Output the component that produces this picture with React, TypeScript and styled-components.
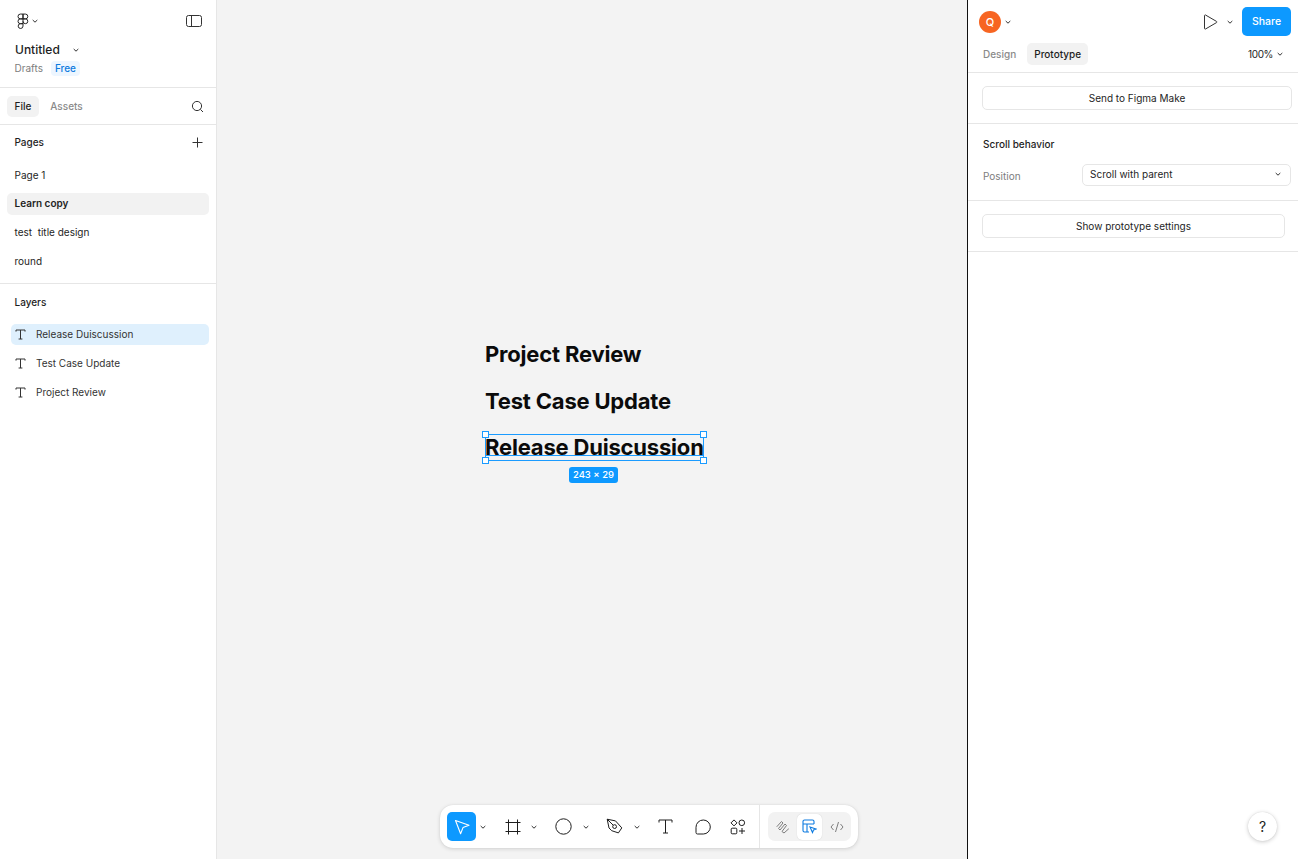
import React from "react";
import styled, { createGlobalStyle } from "styled-components";

const Global = createGlobalStyle`
  html, body { margin: 0; padding: 0; height: 100%; }
  body { font-family: Inter, "Liberation Sans", sans-serif; font-size: 10px; color: #1e1e1e; background: #fff; overflow: hidden; -webkit-font-smoothing: antialiased; }
  #root { height: 100%; }
`;

const Page = styled.div`
  display: grid;
  grid-template-columns: 217px 750px 1px 330px;
  width: 1298px;
  height: 859px;
`;

const LeftPanel = styled.aside`
  display: flex;
  flex-direction: column;
  background: #fff;
  border-right: 1px solid #e6e6e6;
  box-sizing: border-box;
`;

const FileHeader = styled.header`
  height: 88px;
  box-sizing: border-box;
  border-bottom: 1px solid #e6e6e6;
  padding: 11px 14px 0 14px;
`;

const HeaderTop = styled.div`
  display: flex;
  align-items: center;
  justify-content: space-between;
  height: 20px;
`;

const Row = styled.div`
  display: flex;
  align-items: center;
`;

const LogoGroup = styled(Row)`
  gap: 2px;
  padding-left: 3px;
`;

const FileName = styled.div`
  display: flex;
  align-items: center;
  gap: 12px;
  margin-top: 9px;
  padding-left: 1px;
  height: 19px;
  font-size: 12px;
  font-weight: 500;
  color: #1e1e1e;
`;

const FileMeta = styled.div`
  display: flex;
  align-items: center;
  gap: 8px;
  height: 16px;
  margin-top: 1px;
  padding-left: 0.5px;
  color: #7d7d7d;
  font-size: 10px;
`;

const FreeBadge = styled.span`
  background: #edf6ff;
  color: #0d7be0;
  font-size: 10px;
  font-weight: 500;
  border-radius: 4px;
  padding: 0 4px;
  height: 15px;
  line-height: 15px;
`;

const TabsBar = styled.div`
  height: 37px;
  box-sizing: border-box;
  border-bottom: 1px solid #e6e6e6;
  display: flex;
  align-items: center;
  padding: 0 12px 0 7px;
  gap: 4px;
`;

const Tab = styled.div<{ $active?: boolean }>`
  height: 21px;
  line-height: 20px;
  padding: 0 7.5px;
  border-radius: 5px;
  font-size: 10px;
  font-weight: 500;
  background: ${(p) => (p.$active ? "#f2f2f2" : "transparent")};
  color: ${(p) => (p.$active ? "#1e1e1e" : "#8a8a8a")};
`;

const TabsSpacer = styled.div`
  flex: 1;
`;

const PagesSection = styled.section`
  height: 159px;
  box-sizing: border-box;
  border-bottom: 1px solid #e6e6e6;
`;

const SectionHead = styled.div<{ $lift?: boolean }>`
  display: flex;
  align-items: center;
  justify-content: space-between;
  height: 36px;
  box-sizing: border-box;
  padding: 0 13px ${(p) => (p.$lift ? "2px" : "0")} 14.5px;
  font-size: 10px;
  font-weight: 500;
  color: #1e1e1e;
`;

const PageList = styled.div`
  padding: 0 7px;
  display: flex;
  flex-direction: column;
`;

const PageItem = styled.div<{ $active?: boolean }>`
  height: ${(p) => (p.$active ? "22px" : "29px")};
  line-height: ${(p) => (p.$active ? "20px" : "29px")};
  margin: ${(p) => (p.$active ? "3px 0" : "0")};
  padding-left: 7.5px;
  border-radius: 5px;
  font-size: 10px;
  white-space: pre;
  font-weight: ${(p) => (p.$active ? 600 : 400)};
  background: ${(p) => (p.$active ? "#f2f2f2" : "transparent")};
`;

const LayerList = styled.div`
  padding: 4px 7px 0 11px;
  display: flex;
  flex-direction: column;
  gap: 8px;
`;

const LayerItem = styled.div<{ $active?: boolean }>`
  height: 21px;
  box-sizing: border-box;
  display: flex;
  align-items: center;
  gap: 10px;
  padding: 0 0 1px 4px;
  border-radius: 5px;
  font-size: 10px;
  color: #333;
  background: ${(p) => (p.$active ? "#dff0fd" : "transparent")};
`;

const Canvas = styled.main`
  position: relative;
  background: #f3f3f3;
`;

const CanvasText = styled.div<{ $x: number; $y: number }>`
  position: absolute;
  left: ${(p) => p.$x}px;
  top: ${(p) => p.$y}px;
  font-size: 22px;
  font-weight: 700;
  line-height: 29px;
  letter-spacing: -0.19px;
  color: #0b0b0b;
  white-space: nowrap;
`;

const Selection = styled.div`
  position: absolute;
  left: 268px;
  top: 434px;
  width: 217px;
  height: 25px;
  border: 1px solid #1a9bff;
  pointer-events: none;
`;

const Handle = styled.span<{ $h: "l" | "r"; $v: "t" | "b" }>`
  position: absolute;
  width: 5px;
  height: 5px;
  background: #fff;
  border: 1px solid #1a9bff;
  ${(p) => (p.$h === "l" ? "left: -4px;" : "right: -4px;")}
  ${(p) => (p.$v === "t" ? "top: -4px;" : "bottom: -4px;")}
`;

const Underline = styled.span`
  position: absolute;
  left: 0;
  right: 0;
  top: 20px;
  height: 1px;
  background: #1a9bff;
`;

const SizeBadge = styled.div`
  position: absolute;
  left: 352px;
  top: 467px;
  width: 49px;
  height: 16px;
  line-height: 16px;
  text-align: center;
  background: #0d99ff;
  color: #fff;
  border-radius: 3px;
  font-size: 9.5px;
  font-weight: 500;
`;

const Toolbar = styled.div`
  position: absolute;
  left: 223px;
  top: 805px;
  width: 418px;
  height: 43px;
  box-sizing: border-box;
  background: #fff;
  border-radius: 13px;
  box-shadow: 0 1px 4px rgba(0, 0, 0, 0.14), 0 0 1px rgba(0, 0, 0, 0.12);
  display: flex;
  align-items: center;
`;

const ToolGroup = styled.div`
  width: 320px;
  height: 43px;
  box-sizing: border-box;
  border-right: 1px solid #e6e6e6;
  display: grid;
  grid-template-columns: 29px 14px 8px 29px 14px 8px 29px 16px 6px 29px 15px 7px 29px 8px 29px 6px 29px;
  align-items: center;
  padding-left: 7px;
`;

const ToolButton = styled.div<{ $active?: boolean }>`
  width: 29px;
  height: 29px;
  border-radius: 5px;
  background: ${(p) => (p.$active ? "#0d99ff" : "transparent")};
  color: ${(p) => (p.$active ? "#fff" : "#1e1e1e")};
  display: flex;
  align-items: center;
  justify-content: center;
`;

const ModeGroup = styled.div`
  margin-left: 8px;
  width: 83px;
  height: 29px;
  background: #f2f2f2;
  border-radius: 7px;
  display: flex;
  align-items: center;
`;

const ModeButton = styled.div<{ $active?: boolean }>`
  width: ${(p) => (p.$active ? "25px" : "29px")};
  height: 26px;
  border-radius: 5px;
  background: ${(p) => (p.$active ? "#fff" : "transparent")};
  display: flex;
  align-items: center;
  justify-content: center;
  box-shadow: ${(p) => (p.$active ? "0 0 1px rgba(0,0,0,.2)" : "none")};
`;

const Divider = styled.div`
  background: #111;
`;

const RightPanel = styled.aside`
  position: relative;
  background: #fff;
  display: flex;
  flex-direction: column;
`;

const TopBar = styled.div`
  height: 43px;
  box-sizing: border-box;
  padding: 0 7px 0 11px;
  display: flex;
  align-items: center;
  justify-content: space-between;
`;

const AvatarGroup = styled(Row)`
  gap: 3px;
`;

const Avatar = styled.div`
  width: 22px;
  height: 22px;
  border-radius: 50%;
  background: #f76522;
  color: #fff;
  font-size: 11px;
  font-weight: 500;
  display: flex;
  align-items: center;
  justify-content: center;
`;

const PlayGroup = styled(Row)`
  gap: 8px;
`;

const ShareButton = styled.div`
  width: 49px;
  height: 29px;
  background: #0d99ff;
  border-radius: 5px;
  color: #fff;
  font-size: 10.5px;
  font-weight: 500;
  display: flex;
  align-items: center;
  justify-content: center;
`;

const ModeBar = styled.div`
  height: 30px;
  box-sizing: border-box;
  border-bottom: 1px solid #e6e6e6;
  display: flex;
  align-items: flex-start;
  padding: 0 14px 0 8px;
  gap: 4px;
`;

const ModeTab = styled(Tab)`
  height: 22px;
  line-height: 22px;
  padding: 0 7px;
`;

const Zoom = styled.div`
  margin-left: auto;
  display: flex;
  align-items: center;
  gap: 3px;
  height: 22px;
  font-size: 10px;
  letter-spacing: -0.4px;
`;

const Section = styled.section<{ $h: number }>`
  height: ${(p) => p.$h}px;
  box-sizing: border-box;
  border-bottom: 1px solid #e6e6e6;
`;

const WideButton = styled.div<{ $w: number; $top: number }>`
  width: ${(p) => p.$w}px;
  height: 24px;
  margin: ${(p) => p.$top}px 0 0 14px;
  box-sizing: border-box;
  border: 1px solid #e6e6e6;
  border-radius: 5px;
  display: flex;
  align-items: center;
  justify-content: center;
  font-size: 10px;
  color: #1e1e1e;
`;

const ScrollTitle = styled.div`
  margin: 13px 0 0 15px;
  height: 14px;
  line-height: 14px;
  font-size: 10px;
  font-weight: 500;
`;

const PropRow = styled.div`
  display: flex;
  align-items: center;
  margin: 13px 7px 0 15px;
  height: 22px;
`;

const PropLabel = styled.div`
  width: 99px;
  color: #7d7d7d;
  font-size: 10px;
  padding-top: 1px;
`;

const Select = styled.div`
  flex: 1;
  height: 22px;
  box-sizing: border-box;
  border: 1px solid #e6e6e6;
  border-radius: 5px;
  display: flex;
  align-items: center;
  justify-content: space-between;
  padding: 0 8px 2px 7px;
  font-size: 10px;
`;

const HelpButton = styled.div`
  position: absolute;
  right: 21px;
  bottom: 18px;
  width: 29px;
  height: 29px;
  border-radius: 50%;
  background: #fff;
  box-shadow: 0 1px 4px rgba(0, 0, 0, 0.2), 0 0 1px rgba(0, 0, 0, 0.15);
  display: flex;
  align-items: center;
  justify-content: center;
  font-size: 14px;
  color: #1e1e1e;
`;

const Caret = styled.div`
  display: flex;
  justify-content: center;
`;

const Chevron = ({ c = "#333" }: { c?: string }) => (
  <svg width="8" height="8" viewBox="0 0 8 8" fill="none">
    <path d="M1.7 3 L4 5.2 L6.3 3" stroke={c} strokeWidth="1" />
  </svg>
);

const TIcon = () => (
  <svg width="11" height="11" viewBox="0 0 11 11" fill="none" stroke="#333" strokeWidth="1">
    <path d="M1 2.6V1h9v1.6M5.5 1v9M3.6 10h3.8" />
  </svg>
);

const FigmaLogo = () => (
  <svg width="12" height="16" viewBox="0 0 13 17" fill="none" stroke="#1e1e1e" strokeWidth="1.05">
    <path d="M6.5 1H3.7a2.6 2.6 0 0 0 0 5.2h2.8zM6.5 1h2.6a2.6 2.6 0 0 1 0 5.2H6.5zM6.5 6.2H3.7a2.6 2.6 0 0 0 0 5.2h2.8zM6.5 6.2h2.6a2.6 2.6 0 0 1 0 5.2 2.6 2.6 0 0 1-2.6-2.6M6.5 11.4H3.7a2.6 2.6 0 1 0 2.8 2.6z" />
  </svg>
);

const SidebarIcon = () => (
  <svg width="16" height="12" viewBox="0 0 16 12" fill="none" stroke="#333" strokeWidth="1">
    <rect x="0.5" y="0.5" width="15" height="11" rx="2" />
    <path d="M5.5 0.5v11" />
  </svg>
);

const SearchIcon = () => (
  <svg width="13" height="13" viewBox="0 0 13 13" fill="none" stroke="#333" strokeWidth="1">
    <circle cx="6" cy="6" r="4.6" />
    <path d="M9.4 9.4L12 12" />
  </svg>
);

const PlusIcon = () => (
  <svg width="11" height="11" viewBox="0 0 11 11" fill="none" stroke="#333" strokeWidth="1">
    <path d="M5.5 0.5v10M0.5 5.5h10" />
  </svg>
);

const PlayIcon = () => (
  <svg width="15" height="16" viewBox="0 0 15 16" fill="none" stroke="#333" strokeWidth="1">
    <path d="M1.5 1.6c0-.6.5-.9 1-.6l11 6.4c.5.3.5.9 0 1.2l-11 6.4c-.5.3-1-.1-1-.6z" />
  </svg>
);

const MoveIcon = () => (
  <svg width="18" height="18" viewBox="0 0 18 18" fill="none" stroke="#fff" strokeWidth="1.1" strokeLinejoin="round">
    <path d="M2.5 2.5L16 7.2l-6 2.4-2.4 6.2z" />
  </svg>
);

const FrameIcon = () => (
  <svg width="16" height="16" viewBox="0 0 16 16" fill="none" stroke="#1e1e1e" strokeWidth="1">
    <path d="M3.5 0.5v15M12.5 0.5v15M0.5 3.5h15M0.5 12.5h15" />
  </svg>
);

const EllipseIcon = () => (
  <svg width="17" height="17" viewBox="0 0 17 17" fill="none" stroke="#1e1e1e" strokeWidth="1">
    <circle cx="8.5" cy="8.5" r="7.7" />
  </svg>
);

const PenIcon = () => (
  <svg width="17" height="17" viewBox="0 0 17 17" fill="none" stroke="#1e1e1e" strokeWidth="1" strokeLinejoin="round">
    <path d="M1.2 1.2l8.3 1.7 6.3 7-3.4 5-6.7-2.2L3 10z" />
    <circle cx="8.6" cy="8.6" r="1.9" />
    <path d="M1.2 1.2L7.2 7.2" />
  </svg>
);

const TextToolIcon = () => (
  <svg width="15" height="15" viewBox="0 0 15 15" fill="none" stroke="#1e1e1e" strokeWidth="1">
    <path d="M1 3.5V1h13v2.5M7.5 1v13M5 14h5" />
  </svg>
);

const CommentIcon = () => (
  <svg width="16" height="16" viewBox="0 0 16 16" fill="none" stroke="#1e1e1e" strokeWidth="1">
    <path d="M8.3 1a7 7 0 0 1 0 14H2.5A1.5 1.5 0 0 1 1 13.5V8.3A7.2 7.2 0 0 1 8.3 1z" />
  </svg>
);

const ComponentsIcon = () => (
  <svg width="16" height="16" viewBox="0 0 16 16" fill="none" stroke="#1e1e1e" strokeWidth="1">
    <path d="M4 .9L7 3.9 4 6.9 1 3.9z" />
    <circle cx="11.8" cy="3.8" r="2.8" />
    <rect x="1.2" y="9.2" width="5.6" height="5.6" rx="1" />
    <path d="M12 9v6M9 12h6" />
  </svg>
);

const DrawIcon = () => (
  <svg width="14" height="14" viewBox="0 0 14 14" fill="none" stroke="#7d7d7d" strokeWidth="1" strokeLinecap="round">
    <path d="M1 6.5L5.5 1.5 7 3 2.5 8.5 4 10l5-6 1.5 1.5L6 11.5l2 1.5 4.5-4" />
  </svg>
);

const DesignIcon = () => (
  <svg width="15" height="15" viewBox="0 0 15 15" fill="none" stroke="#0d7be0" strokeWidth="1.1">
    <path d="M7 13H2.5A1.5 1.5 0 0 1 1 11.5v-9A1.5 1.5 0 0 1 2.5 1h8A1.5 1.5 0 0 1 12 2.5V5M1 5h11M5 5v8" />
    <path d="M8 8l6 2-2.5 1-1 2.5z" fill="#fff" />
  </svg>
);

const CodeIcon = () => (
  <svg width="14" height="12" viewBox="0 0 14 12" fill="none" stroke="#7d7d7d" strokeWidth="1">
    <path d="M3.5 3L1 6l2.5 3M10.5 3L13 6l-2.5 3M8.5 1L5.5 11" />
  </svg>
);

export default function App() {
  return (
    <Page>
      <Global />
      <LeftPanel>
        <FileHeader>
          <HeaderTop>
            <LogoGroup>
              <FigmaLogo />
              <Chevron />
            </LogoGroup>
            <Row>
              <SidebarIcon />
            </Row>
          </HeaderTop>
          <FileName>
            Untitled
            <Chevron />
          </FileName>
          <FileMeta>
            Drafts
            <FreeBadge>Free</FreeBadge>
          </FileMeta>
        </FileHeader>
        <TabsBar>
          <Tab $active>File</Tab>
          <Tab>Assets</Tab>
          <TabsSpacer />
          <SearchIcon />
        </TabsBar>
        <PagesSection>
          <SectionHead $lift>
            Pages
            <PlusIcon />
          </SectionHead>
          <PageList>
            <PageItem>Page 1</PageItem>
            <PageItem $active>Learn copy</PageItem>
            <PageItem>test  title design</PageItem>
            <PageItem>round</PageItem>
          </PageList>
        </PagesSection>
        <SectionHead>Layers</SectionHead>
        <LayerList>
          <LayerItem $active>
            <TIcon />
            Release Duiscussion
          </LayerItem>
          <LayerItem>
            <TIcon />
            Test Case Update
          </LayerItem>
          <LayerItem>
            <TIcon />
            Project Review
          </LayerItem>
        </LayerList>
      </LeftPanel>

      <Canvas>
        <CanvasText $x={268} $y={340}>Project Review</CanvasText>
        <CanvasText $x={268} $y={387}>Test Case Update</CanvasText>
        <CanvasText $x={268} $y={433}>Release Duiscussion</CanvasText>
        <Selection>
          <Underline />
          <Handle $h="l" $v="t" />
          <Handle $h="r" $v="t" />
          <Handle $h="l" $v="b" />
          <Handle $h="r" $v="b" />
        </Selection>
        <SizeBadge>243 × 29</SizeBadge>
        <Toolbar>
          <ToolGroup>
            <ToolButton $active><MoveIcon /></ToolButton>
            <Caret><Chevron /></Caret>
            <span />
            <ToolButton><FrameIcon /></ToolButton>
            <Caret><Chevron /></Caret>
            <span />
            <ToolButton><EllipseIcon /></ToolButton>
            <Caret><Chevron /></Caret>
            <span />
            <ToolButton><PenIcon /></ToolButton>
            <Caret><Chevron /></Caret>
            <span />
            <ToolButton><TextToolIcon /></ToolButton>
            <span />
            <ToolButton><CommentIcon /></ToolButton>
            <span />
            <ToolButton><ComponentsIcon /></ToolButton>
          </ToolGroup>
          <ModeGroup>
            <ModeButton><DrawIcon /></ModeButton>
            <ModeButton $active><DesignIcon /></ModeButton>
            <ModeButton><CodeIcon /></ModeButton>
          </ModeGroup>
        </Toolbar>
      </Canvas>

      <Divider />

      <RightPanel>
        <TopBar>
          <AvatarGroup>
            <Avatar>Q</Avatar>
            <Chevron />
          </AvatarGroup>
          <PlayGroup>
            <PlayIcon />
            <Chevron />
            <ShareButton>Share</ShareButton>
          </PlayGroup>
        </TopBar>
        <ModeBar>
          <ModeTab>Design</ModeTab>
          <ModeTab $active>Prototype</ModeTab>
          <Zoom>
            100%
            <Chevron />
          </Zoom>
        </ModeBar>
        <Section $h={51}>
          <WideButton $w={310} $top={13}>Send to Figma Make</WideButton>
        </Section>
        <Section $h={77}>
          <ScrollTitle>Scroll behavior</ScrollTitle>
          <PropRow>
            <PropLabel>Position</PropLabel>
            <Select>
              Scroll with parent
              <Chevron />
            </Select>
          </PropRow>
        </Section>
        <Section $h={51}>
          <WideButton $w={303} $top={13}>Show prototype settings</WideButton>
        </Section>
        <HelpButton>?</HelpButton>
      </RightPanel>
    </Page>
  );
}
